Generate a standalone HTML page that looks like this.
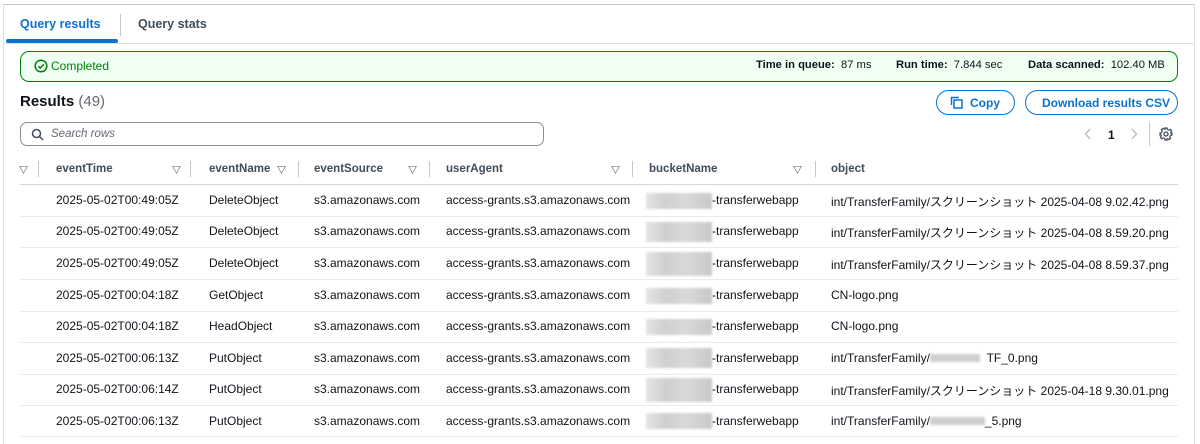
<!DOCTYPE html><html><head><meta charset="utf-8"><style>
*{box-sizing:border-box;margin:0;padding:0}
body{width:1200px;height:437px;background:#fff;font-family:"Liberation Sans","Noto Sans CJK JP",sans-serif;color:#0f141a;position:relative;overflow:hidden;font-size:12px}
.a{position:absolute;white-space:nowrap}
.b{font-weight:bold}
.row{position:absolute;left:20px;width:1158px;height:1px;background:#e9ebed}
.cell{position:absolute;font-size:12px;color:#0f141a}
.blur{position:absolute;left:646px;width:66px;height:16px;background:linear-gradient(90deg,#e4e4e4,#cfcfcf 30%,#d9d9d9 60%,#c9c9c9);filter:blur(1px)}
.sep{position:absolute;width:1px;height:16px;background:#c6c6cd;top:161px}
.tri{position:absolute;top:163px;font-size:9px;color:#232f3e;font-weight:bold}
</style></head><body>
<div class="a" style="left:3px;top:4px;width:1192px;height:440px;border-top:1px solid #c6c6cd;border-left:1px solid #e0e0e0;border-right:1px solid #e0e0e0"></div>
<div class="a" style="left:4px;top:43px;width:1190px;height:1px;background:#e0e0e0"></div>
<div class="a b" style="left:20px;top:17px;font-size:12.5px;color:#0972d3">Query results</div>
<div class="a" style="left:6px;top:39px;width:112px;height:4px;background:#0972d3;border-radius:2px"></div>
<div class="a" style="left:120px;top:14px;width:1px;height:22px;background:#c6c6cd"></div>
<div class="a b" style="left:138px;top:17px;font-size:12.5px;color:#414d5c">Query stats</div>
<div class="a" style="left:20px;top:51px;width:1158px;height:31px;background:#effff1;border:1.5px solid #037f0c;border-radius:9px"></div>
<svg class="a" style="left:34px;top:59px" width="14" height="14" viewBox="0 0 14 14"><circle cx="7" cy="7" r="5.8" fill="none" stroke="#037f0c" stroke-width="1.5"/><path d="M4.3 7.2l1.9 1.9 3.6-3.7" fill="none" stroke="#037f0c" stroke-width="1.5"/></svg>
<div class="a" style="left:51px;top:59px;font-size:12px;color:#037f0c">Completed</div>
<div class="a" style="left:756px;top:59px;font-size:11.2px"><b>Time in queue:</b>&nbsp; 87 ms</div>
<div class="a" style="left:896px;top:59px;font-size:11.2px"><b>Run time:</b>&nbsp; 7.844 sec</div>
<div class="a" style="left:1028px;top:59px;font-size:11.2px"><b>Data scanned:</b>&nbsp; 102.40 MB</div>
<div class="a b" style="left:20px;top:93px;font-size:15px">Results <span style="font-weight:normal;color:#656871">(49)</span></div>
<div class="a" style="left:936px;top:90px;width:79px;height:25px;border:1.5px solid #0972d3;border-radius:13px"></div>
<svg class="a" style="left:950px;top:96px" width="13" height="13" viewBox="0 0 13 13"><rect x="4" y="4" width="8" height="8" fill="none" stroke="#0972d3" stroke-width="1.5"/><path d="M1.5 9V1.5H9" fill="none" stroke="#0972d3" stroke-width="1.5"/></svg>
<div class="a b" style="left:970px;top:96px;color:#0972d3;font-size:12px">Copy</div>
<div class="a" style="left:1025px;top:90px;width:153px;height:25px;border:1.5px solid #0972d3;border-radius:13px"></div>
<div class="a b" style="left:1042px;top:96px;color:#0972d3;font-size:12px">Download results CSV</div>
<div class="a" style="left:20px;top:122px;width:524px;height:24px;border:1.5px solid #8c8c94;border-radius:7px"></div>
<svg class="a" style="left:31px;top:128px" width="13" height="13" viewBox="0 0 13 13"><circle cx="5.5" cy="5.5" r="4" fill="none" stroke="#414d5c" stroke-width="1.5"/><path d="M8.5 8.5l3.5 3.5" stroke="#414d5c" stroke-width="1.5"/></svg>
<div class="a" style="left:51px;top:128px;font-style:italic;color:#656871;font-size:11.5px">Search rows</div>
<svg class="a" style="left:1084px;top:128px" width="8" height="12" viewBox="0 0 8 12"><path d="M6 1L1.5 6 6 11" fill="none" stroke="#b4b4bb" stroke-width="1.3"/></svg>
<div class="a b" style="left:1108px;top:128px;font-size:12px">1</div>
<svg class="a" style="left:1130px;top:128px" width="8" height="12" viewBox="0 0 8 12"><path d="M2 1l4.5 5L2 11" fill="none" stroke="#b4b4bb" stroke-width="1.3"/></svg>
<div class="a" style="left:1149px;top:122px;width:1px;height:24px;background:#c6c6cd"></div>
<svg class="a" style="left:1159px;top:127px" width="14" height="14" viewBox="0 0 14 14"><circle cx="7" cy="7" r="2" fill="none" stroke="#414d5c" stroke-width="1.3"/><path d="M6 1h2l.4 1.6 1.4.6 1.4-.9 1.4 1.4-.9 1.4.6 1.4L13 6v2l-1.6.4-.6 1.4.9 1.4-1.4 1.4-1.4-.9-1.4.6L8 13H6l-.4-1.6-1.4-.6-1.4.9-1.4-1.4.9-1.4-.6-1.4L1 8V6l1.6-.4.6-1.4-.9-1.4 1.4-1.4 1.4.9 1.4-.6z" fill="none" stroke="#414d5c" stroke-width="1.2"/></svg>
<div class="tri" style="left:19px">▽</div><div class="sep" style="left:38px"></div>
<div class="a b" style="left:56px;top:163px;color:#414d5c;font-size:11.5px">eventTime</div><div class="tri" style="left:172px">▽</div><div class="sep" style="left:190px"></div>
<div class="a b" style="left:209px;top:163px;color:#414d5c;font-size:11.5px">eventName</div><div class="tri" style="left:277px">▽</div><div class="sep" style="left:298px"></div>
<div class="a b" style="left:314px;top:163px;color:#414d5c;font-size:11.5px">eventSource</div><div class="tri" style="left:408px">▽</div><div class="sep" style="left:429px"></div>
<div class="a b" style="left:446px;top:163px;color:#414d5c;font-size:11.5px">userAgent</div><div class="tri" style="left:611px">▽</div><div class="sep" style="left:632px"></div>
<div class="a b" style="left:649px;top:163px;color:#414d5c;font-size:11.5px">bucketName</div><div class="tri" style="left:793px">▽</div><div class="sep" style="left:815px"></div>
<div class="a b" style="left:831px;top:163px;color:#414d5c;font-size:11.5px">object</div>
<div class="row" style="top:184px;background:#d5d5da"></div>
<div class="row" style="top:216px"></div><div class="row" style="top:247px"></div><div class="row" style="top:279px"></div><div class="row" style="top:311px"></div><div class="row" style="top:342px"></div><div class="row" style="top:374px"></div><div class="row" style="top:405px"></div><div class="row" style="top:436px"></div>

<div class="cell a" style="left:56px;top:193px">2025-05-02T00:49:05Z</div><div class="cell a" style="left:209px;top:193px">DeleteObject</div><div class="cell a" style="left:314px;top:193px">s3.amazonaws.com</div><div class="cell a" style="left:446px;top:193px">access-grants.s3.amazonaws.com</div><div class="blur" style="top:193px"></div><div class="cell a" style="left:712px;top:193px">-transferwebapp</div><div class="cell a" style="left:831px;top:193px">int/TransferFamily/スクリーンショット 2025-04-08 9.02.42.png</div>
<div class="cell a" style="left:56px;top:224px">2025-05-02T00:49:05Z</div><div class="cell a" style="left:209px;top:224px">DeleteObject</div><div class="cell a" style="left:314px;top:224px">s3.amazonaws.com</div><div class="cell a" style="left:446px;top:224px">access-grants.s3.amazonaws.com</div><div class="blur" style="top:222px;height:20px"></div><div class="cell a" style="left:712px;top:224px">-transferwebapp</div><div class="cell a" style="left:831px;top:224px">int/TransferFamily/スクリーンショット 2025-04-08 8.59.20.png</div>
<div class="cell a" style="left:56px;top:256px">2025-05-02T00:49:05Z</div><div class="cell a" style="left:209px;top:256px">DeleteObject</div><div class="cell a" style="left:314px;top:256px">s3.amazonaws.com</div><div class="cell a" style="left:446px;top:256px">access-grants.s3.amazonaws.com</div><div class="blur" style="top:252px;height:24px"></div><div class="cell a" style="left:712px;top:256px">-transferwebapp</div><div class="cell a" style="left:831px;top:256px">int/TransferFamily/スクリーンショット 2025-04-08 8.59.37.png</div>
<div class="cell a" style="left:56px;top:288px">2025-05-02T00:04:18Z</div><div class="cell a" style="left:209px;top:288px">GetObject</div><div class="cell a" style="left:314px;top:288px">s3.amazonaws.com</div><div class="cell a" style="left:446px;top:288px">access-grants.s3.amazonaws.com</div><div class="blur" style="top:288px"></div><div class="cell a" style="left:712px;top:288px">-transferwebapp</div><div class="cell a" style="left:831px;top:288px">CN-logo.png</div>
<div class="cell a" style="left:56px;top:319px">2025-05-02T00:04:18Z</div><div class="cell a" style="left:209px;top:319px">HeadObject</div><div class="cell a" style="left:314px;top:319px">s3.amazonaws.com</div><div class="cell a" style="left:446px;top:319px">access-grants.s3.amazonaws.com</div><div class="blur" style="top:319px"></div><div class="cell a" style="left:712px;top:319px">-transferwebapp</div><div class="cell a" style="left:831px;top:319px">CN-logo.png</div>
<div class="cell a" style="left:56px;top:351px">2025-05-02T00:06:13Z</div><div class="cell a" style="left:209px;top:351px">PutObject</div><div class="cell a" style="left:314px;top:351px">s3.amazonaws.com</div><div class="cell a" style="left:446px;top:351px">access-grants.s3.amazonaws.com</div><div class="blur" style="top:348px;height:20px"></div><div class="cell a" style="left:712px;top:351px">-transferwebapp</div><div class="cell a" style="left:831px;top:351px">int/TransferFamily/<span style="display:inline-block;width:50px;height:8px;background:#cfcfcf;filter:blur(1px)"></span>&nbsp;&nbsp;TF_0.png</div>
<div class="cell a" style="left:56px;top:382px">2025-05-02T00:06:14Z</div><div class="cell a" style="left:209px;top:382px">PutObject</div><div class="cell a" style="left:314px;top:382px">s3.amazonaws.com</div><div class="cell a" style="left:446px;top:382px">access-grants.s3.amazonaws.com</div><div class="blur" style="top:378px;height:24px"></div><div class="cell a" style="left:712px;top:382px">-transferwebapp</div><div class="cell a" style="left:831px;top:382px">int/TransferFamily/スクリーンショット 2025-04-18 9.30.01.png</div>
<div class="cell a" style="left:56px;top:414px">2025-05-02T00:06:13Z</div><div class="cell a" style="left:209px;top:414px">PutObject</div><div class="cell a" style="left:314px;top:414px">s3.amazonaws.com</div><div class="cell a" style="left:446px;top:414px">access-grants.s3.amazonaws.com</div><div class="blur" style="top:413px"></div><div class="cell a" style="left:712px;top:414px">-transferwebapp</div><div class="cell a" style="left:831px;top:414px">int/TransferFamily/<span style="display:inline-block;width:55px;height:8px;background:#cfcfcf;filter:blur(1px)"></span>_5.png</div>
</body></html>
